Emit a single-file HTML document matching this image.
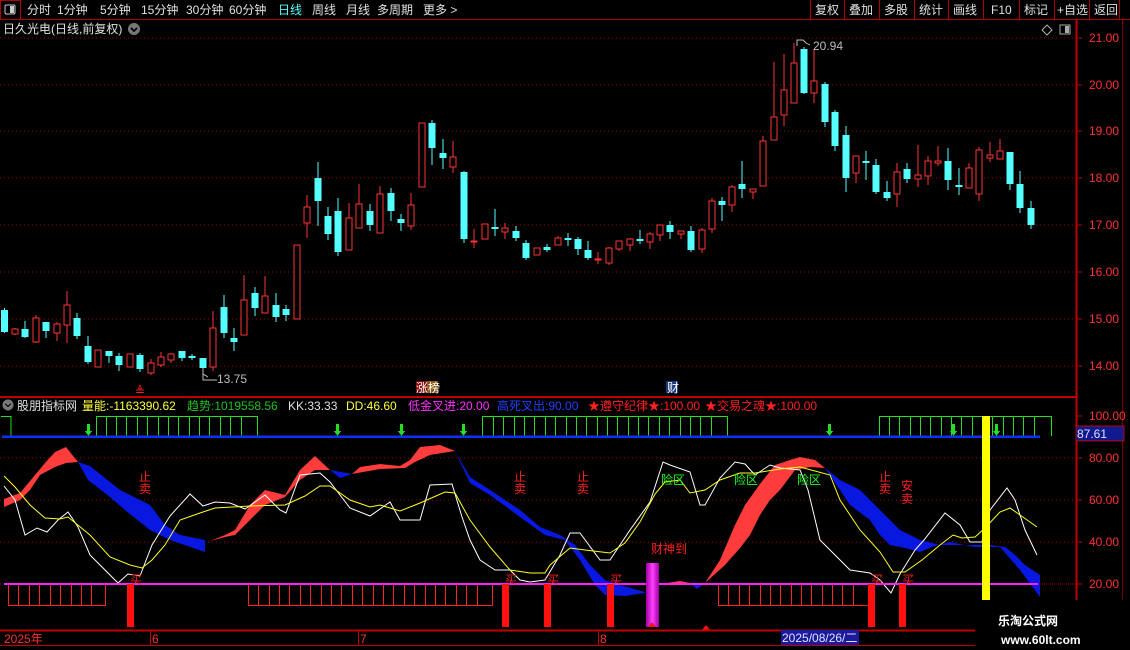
<!DOCTYPE html>
<html><head><meta charset="utf-8"><style>
html,body{margin:0;padding:0;background:#000;width:1130px;height:650px;overflow:hidden}
svg{display:block}
text{font-family:"Liberation Sans","Noto Sans CJK SC",sans-serif;font-size:12px}
</style></head><body>
<svg width="1130" height="650" viewBox="0 0 1130 650" xmlns="http://www.w3.org/2000/svg" shape-rendering="crispEdges">
<rect width="1130" height="650" fill="#000"/>
<!-- top bar -->
<line x1="0" y1="19.5" x2="1130" y2="19.5" stroke="#b00000"/>
<rect x="0.5" y="0.5" width="20" height="19" fill="none" stroke="#b00000"/>
<rect x="5" y="5" width="10" height="9" rx="1.5" fill="none" stroke="#ccc" stroke-width="1.3"/><rect x="10" y="6" width="4" height="7" fill="#ccc"/>
<g fill="#e0e0e0"><text x="27" y="14">分时</text><text x="57" y="14">1分钟</text><text x="100" y="14">5分钟</text><text x="141" y="14">15分钟</text><text x="186" y="14">30分钟</text><text x="229" y="14">60分钟</text><text x="278" y="14" fill="#54ffff">日线</text><text x="312" y="14">周线</text><text x="346" y="14">月线</text><text x="377" y="14">多周期</text><text x="423" y="14">更多 &gt;</text></g>
<g stroke="#b00000"><line x1="810.5" y1="0" x2="810.5" y2="19"/><line x1="844.5" y1="0" x2="844.5" y2="19"/><line x1="879.5" y1="0" x2="879.5" y2="19"/><line x1="914.5" y1="0" x2="914.5" y2="19"/><line x1="948.5" y1="0" x2="948.5" y2="19"/><line x1="983.5" y1="0" x2="983.5" y2="19"/><line x1="1019.5" y1="0" x2="1019.5" y2="19"/><line x1="1054.5" y1="0" x2="1054.5" y2="19"/><line x1="1089.5" y1="0" x2="1089.5" y2="19"/><line x1="1119.5" y1="0" x2="1119.5" y2="19"/></g>
<g fill="#e0e0e0"><text x="815" y="14">复权</text><text x="849" y="14">叠加</text><text x="884" y="14">多股</text><text x="919" y="14">统计</text><text x="953" y="14">画线</text><text x="991" y="14">F10</text><text x="1024" y="14">标记</text><text x="1057" y="14">+自选</text><text x="1094" y="14">返回</text></g>
<text x="3" y="33" fill="#e0e0e0">日久光电(日线,前复权)</text>
<circle cx="134" cy="29" r="6" fill="#777"/><path d="M131 28 L134 31 L137 28" stroke="#000" stroke-width="1.5" fill="none"/>
<path d="M1047 25 L1052 30 L1047 35 L1042 30Z" fill="none" stroke="#aaa"/>
<rect x="1060" y="25" width="10" height="9" fill="none" stroke="#aaa"/><rect x="1065" y="26" width="4" height="7" fill="#aaa"/>
<!-- axes -->
<line x1="1076.5" y1="20" x2="1076.5" y2="630" stroke="#c00000" stroke-width="2"/>
<line x1="1122.5" y1="20" x2="1122.5" y2="630" stroke="#800000"/>
<g stroke="#a00000" stroke-dasharray="1,3"><line x1="0" y1="38" x2="1076" y2="38"/><line x1="0" y1="85" x2="1076" y2="85"/><line x1="0" y1="131" x2="1076" y2="131"/><line x1="0" y1="178" x2="1076" y2="178"/><line x1="0" y1="225" x2="1076" y2="225"/><line x1="0" y1="272" x2="1076" y2="272"/><line x1="0" y1="319" x2="1076" y2="319"/><line x1="0" y1="366" x2="1076" y2="366"/>
<line x1="0" y1="458" x2="1076" y2="458"/><line x1="0" y1="500" x2="1076" y2="500"/><line x1="0" y1="542" x2="1076" y2="542"/><line x1="0" y1="584" x2="1076" y2="584"/></g>
<g stroke="#c00000"><line x1="1076" y1="38" x2="1082" y2="38"/><line x1="1076" y1="85" x2="1082" y2="85"/><line x1="1076" y1="131" x2="1082" y2="131"/><line x1="1076" y1="178" x2="1082" y2="178"/><line x1="1076" y1="225" x2="1082" y2="225"/><line x1="1076" y1="272" x2="1082" y2="272"/><line x1="1076" y1="319" x2="1082" y2="319"/><line x1="1076" y1="366" x2="1082" y2="366"/><line x1="1076" y1="416" x2="1082" y2="416"/><line x1="1076" y1="458" x2="1082" y2="458"/><line x1="1076" y1="500" x2="1082" y2="500"/><line x1="1076" y1="542" x2="1082" y2="542"/><line x1="1076" y1="584" x2="1082" y2="584"/></g>
<g fill="#ff3232"><text x="1089" y="42">21.00</text><text x="1089" y="89">20.00</text><text x="1089" y="135">19.00</text><text x="1089" y="182">18.00</text><text x="1089" y="229">17.00</text><text x="1089" y="276">16.00</text><text x="1089" y="323">15.00</text><text x="1089" y="370">14.00</text>
<text x="1089" y="420">100.00</text><text x="1089" y="462">80.00</text><text x="1089" y="504">60.00</text><text x="1089" y="546">40.00</text><text x="1089" y="588">20.00</text></g>
<rect x="1076" y="426" width="48" height="15" fill="#101a8c" stroke="#c00000"/><text x="1077" y="438" fill="#e0e0ff">87.61</text>
<!-- candles cyan -->
<g stroke="#54ffff" fill="none" stroke-width="1.3"><path d="M4.5 308V333M25 321V338M46 322V338M77 313V339M88 336V364M109 351V363M119 353V371M140 353V372M182 351V361M192 354V360M203 358V378M224 295V338M234 328V351M255 287V316M276 293V322M286 305V321M318 162V226M328 207V240M338 198V256M370 204V231M391 188V221M401 214V231M432 120V165M443 139V169M464 171V243M495 209V236M516 226V241M526 240V260M547 244V252M568 233V246M578 237V255M588 241V260M640 230V244M670 221V239M691 226V252M722 197V221M742 161V198M804 47V94M825 82V127M835 110V151M846 126V192M866 151V180M876 159V194M887 181V201M907 163V183M948 148V190M959 168V195M1010 152V190M1020 171V213M1031 201V229"/></g>
<g fill="#54ffff"><rect x="1" y="310" width="7" height="22"/><rect x="21.5" y="329" width="7" height="8"/><rect x="42.5" y="322" width="7" height="9"/><rect x="73.5" y="318" width="7" height="18"/><rect x="84.5" y="346" width="7" height="16"/><rect x="105.5" y="351" width="7" height="5"/><rect x="115.5" y="356" width="7" height="9"/><rect x="136.5" y="355" width="7" height="14"/><rect x="178.5" y="351" width="7" height="7"/><rect x="188.5" y="356" width="7" height="2"/><rect x="199.5" y="358" width="7" height="10"/><rect x="220.5" y="307" width="7" height="26"/><rect x="230.5" y="338" width="7" height="4"/><rect x="251.5" y="293" width="7" height="15"/><rect x="272.5" y="305" width="7" height="12"/><rect x="282.5" y="309" width="7" height="6"/><rect x="314.5" y="178" width="7" height="23"/><rect x="324.5" y="216" width="7" height="18"/><rect x="334.5" y="211" width="7" height="41"/><rect x="366.5" y="211" width="7" height="14"/><rect x="387.5" y="193" width="7" height="18"/><rect x="397.5" y="219" width="7" height="4"/><rect x="428.5" y="123" width="7" height="25"/><rect x="439.5" y="153" width="7" height="5"/><rect x="460.5" y="172" width="7" height="67"/><rect x="491.5" y="227" width="7" height="2"/><rect x="512.5" y="231" width="7" height="7"/><rect x="522.5" y="243" width="7" height="15"/><rect x="543.5" y="247" width="7" height="3"/><rect x="564.5" y="238" width="7" height="2"/><rect x="574.5" y="239" width="7" height="10"/><rect x="584.5" y="250" width="7" height="8"/><rect x="636.5" y="239" width="7" height="2"/><rect x="666.5" y="225" width="7" height="7"/><rect x="687.5" y="231" width="7" height="19"/><rect x="718.5" y="201" width="7" height="4"/><rect x="738.5" y="184" width="7" height="5"/><rect x="800.5" y="49" width="7" height="44"/><rect x="821.5" y="84" width="7" height="38"/><rect x="831.5" y="112" width="7" height="34"/><rect x="842.5" y="135" width="7" height="43"/><rect x="862.5" y="161" width="7" height="2"/><rect x="872.5" y="165" width="7" height="27"/><rect x="883.5" y="192" width="7" height="6"/><rect x="903.5" y="169" width="7" height="10"/><rect x="944.5" y="161" width="7" height="19"/><rect x="955.5" y="185" width="7" height="2"/><rect x="1006.5" y="152" width="7" height="32"/><rect x="1016.5" y="184" width="7" height="24"/><rect x="1027.5" y="208" width="7" height="17"/></g>
<!-- candles red -->
<g stroke="#ff3232" fill="none" stroke-width="1.3"><path d="M15 328V335M36 315V343M57 322V341M67 291V343M151 359V375M161 352V367M171 353V363M213 311V371M244 275V335M265 276V313M307 195V238M349 203V250M359 184V228M380 186V233M411 193V230M453 141V173M474 229V248M505 223V239M558 236V245M598 252V264M609 247V265M619 241V251M630 238V251M650 232V249M660 225V241M681 231V239M702 228V253M712 198V233M732 185V212M753 189V199M763 136V186M774 62V140M784 54V126M794 43V103M814 49V103M856 156V183M897 163V207M918 145V187M928 156V185M938 146V166M969 163V188M979 147V201M990 142V162M1000 139V159"/></g>
<g stroke="#ff3232" fill="#000" stroke-width="1.3"><rect x="12" y="329" width="6" height="5"/><rect x="33" y="318" width="6" height="24"/><rect x="54" y="324" width="6" height="9"/><rect x="64" y="305" width="6" height="20"/><rect x="95" y="350" width="6" height="17"/><rect x="127" y="354" width="6" height="13"/><rect x="148" y="363" width="6" height="10"/><rect x="158" y="357" width="6" height="8"/><rect x="168" y="354" width="6" height="6"/><rect x="210" y="328" width="6" height="39"/><rect x="241" y="300" width="6" height="35"/><rect x="262" y="296" width="6" height="17"/><rect x="294" y="245" width="6" height="74"/><rect x="304" y="207" width="6" height="16"/><rect x="346" y="218" width="6" height="32"/><rect x="356" y="204" width="6" height="24"/><rect x="377" y="194" width="6" height="39"/><rect x="408" y="205" width="6" height="21"/><rect x="419" y="123" width="6" height="64"/><rect x="450" y="157" width="6" height="10"/><rect x="471" y="241" width="6" height="1"/><rect x="482" y="224" width="6" height="15"/><rect x="502" y="228" width="6" height="4"/><rect x="534" y="248" width="6" height="7"/><rect x="555" y="238" width="6" height="7"/><rect x="595" y="259" width="6" height="1"/><rect x="606" y="248" width="6" height="15"/><rect x="616" y="241" width="6" height="8"/><rect x="627" y="239" width="6" height="6"/><rect x="647" y="234" width="6" height="8"/><rect x="657" y="225" width="6" height="10"/><rect x="678" y="231" width="6" height="3"/><rect x="699" y="230" width="6" height="19"/><rect x="709" y="201" width="6" height="28"/><rect x="729" y="187" width="6" height="18"/><rect x="750" y="189" width="6" height="3"/><rect x="760" y="141" width="6" height="45"/><rect x="771" y="117" width="6" height="23"/><rect x="781" y="90" width="6" height="25"/><rect x="791" y="63" width="6" height="40"/><rect x="811" y="81" width="6" height="12"/><rect x="853" y="156" width="6" height="17"/><rect x="894" y="172" width="6" height="22"/><rect x="915" y="175" width="6" height="4"/><rect x="925" y="161" width="6" height="15"/><rect x="935" y="161" width="6" height="2"/><rect x="966" y="168" width="6" height="20"/><rect x="976" y="150" width="6" height="44"/><rect x="987" y="155" width="6" height="3"/><rect x="997" y="151" width="6" height="8"/></g>
<path d="M203 368V380H217M203 374L208 377" stroke="#bbb" fill="none"/><text x="217" y="383" fill="#bbb">13.75</text>
<path d="M797 46V40H803L806 43L810 45" stroke="#bbb" fill="none"/><text x="813" y="50" fill="#bbb">20.94</text>
<text x="135" y="395" fill="#ff2020" font-size="11">≜</text>
<rect x="416" y="381" width="11" height="12" fill="#8a0a0a"/><rect x="427" y="381" width="11" height="12" fill="#8a5a10"/><text x="416" y="392" fill="#fff" font-size="11">涨榜</text>
<rect x="666" y="381" width="12" height="12" fill="#1a3a7a"/><text x="667" y="392" fill="#fff" font-size="11">财</text>
<!-- indicator header -->
<line x1="0" y1="397" x2="1076" y2="397" stroke="#c00000" stroke-width="2"/>
<circle cx="8" cy="405" r="5.5" fill="#777"/><path d="M5.5 404L8 406.5L10.5 404" stroke="#000" fill="none" stroke-width="1.3"/>
<text x="17" y="410" fill="#e0e0e0">股朋指标网</text>
<text x="82" y="410" fill="#ffff40">量能:-1163390.62</text>
<text x="187" y="410" fill="#20c020">趋势:1019558.56</text>
<text x="288" y="410" fill="#e0e0e0">KK:33.33</text>
<text x="346" y="410" fill="#ffff40">DD:46.60</text>
<text x="408" y="410" fill="#ff30ff">低金叉进:20.00</text>
<text x="497" y="410" fill="#2040ff">高死叉出:90.00</text>
<text x="588" y="410" fill="#ff2020">★遵守纪律★:100.00</text>
<text x="705" y="410" fill="#ff2020">★交易之魂★:100.00</text>
<!-- green boxes -->
<g stroke="#20e020" fill="none"><path d="M1 416.5H11V436M96.5 436V416.5H257.5V436M482.5 436V416.5H727.5V436M879.5 436V416.5H1051.5V436"/>
<path d="M106.5 417V436M116.5 417V436M126.5 417V436M137.5 417V436M147.5 417V436M158.5 417V436M168.5 417V436M178.5 417V436M189.5 417V436M199.5 417V436M209.5 417V436M220.5 417V436M230.5 417V436M241.5 417V436M493.5 417V436M503.5 417V436M514.5 417V436M524.5 417V436M534.5 417V436M545.5 417V436M555.5 417V436M566.5 417V436M576.5 417V436M586.5 417V436M597.5 417V436M607.5 417V436M617.5 417V436M628.5 417V436M638.5 417V436M648.5 417V436M659.5 417V436M669.5 417V436M680.5 417V436M690.5 417V436M700.5 417V436M711.5 417V436M889.5 417V436M899.5 417V436M910.5 417V436M920.5 417V436M930.5 417V436M941.5 417V436M951.5 417V436M961.5 417V436M972.5 417V436M982.5 417V436M992.5 417V436M1003.5 417V436M1013.5 417V436M1023.5 417V436M1034.5 417V436"/></g>
<line x1="2" y1="436.5" x2="1040" y2="436.5" stroke="#1030ff" stroke-width="2.5"/>
<g fill="#20e020"><path d="M85 431h7l-3.5 5zM87 424h3v7h-3z"/><path d="M334 431h7l-3.5 5zM336 424h3v7h-3z"/><path d="M398 431h7l-3.5 5zM400 424h3v7h-3z"/><path d="M460 431h7l-3.5 5zM462 424h3v7h-3z"/><path d="M826 431h7l-3.5 5zM828 424h3v7h-3z"/><path d="M950 431h7l-3.5 5zM952 424h3v7h-3z"/><path d="M993 431h7l-3.5 5zM995 424h3v7h-3z"/></g>
<!-- ribbons -->
<g shape-rendering="auto">
<polygon fill="#ff3c3c" points="4,499 20,493 35,475 45,463 55,452 66,447 78,462 66,463 55,467 40,475 30,490 20,500 4,507"/>
<polygon fill="#0818e0" points="78,462 90,466 120,490 150,505 165,525 180,535 205,540 205,552 170,540 150,530 125,510 110,497 88,480"/>
<polygon fill="#ff3c3c" points="210,541 225,535 235,530 250,505 265,490 285,495 300,470 315,456 330,470 315,470 300,480 285,497 265,505 250,520 235,535 225,537"/>
<polygon fill="#0818e0" points="330,470 352,474 340,478"/>
<polygon fill="#ff3c3c" points="352,474 360,467 380,464 400,466 410,460 420,447 440,445 455,451 430,455 415,462 405,468 380,469"/>
<polygon fill="#0818e0" points="455,451 470,477 490,490 520,510 540,527 560,535 575,545 590,565 605,580 620,585 645,592 645,593 625,596 605,595 595,585 580,560 565,540 545,535 520,517 490,495 470,483"/>
<polygon fill="#ff3c3c" points="660,584 680,581 690,583 680,585"/>
<polygon fill="#0818e0" points="690,583 705,583 697,589"/>
<polygon fill="#ff3c3c" points="705,583 720,560 735,525 745,505 760,484 775,465 790,460 800,457 815,460 825,468 810,467 795,470 780,490 770,500 760,515 750,535 740,548 725,565"/>
<polygon fill="#0818e0" points="825,468 840,480 860,490 880,510 900,530 920,540 940,545 990,545 1005,547 1015,555 1025,565 1040,575 1040,597 1020,570 1000,547 975,547 950,542 935,546 920,552 905,548 890,545 880,535 870,520 850,505 840,490"/>
<polyline fill="none" stroke="#fff" stroke-width="1" points="4,486 15,500 25,535 37,528 47,532 58,520 68,512 78,527 90,555 100,565 118,583 128,574 140,576 152,545 170,516 190,494 203,506 215,502 230,503 245,509 265,495 280,510 286,513 300,475 320,473 330,482 350,508 370,516 390,502 400,520 420,520 430,485 452,484 462,517 470,540 480,560 495,570 510,570 520,580 530,582 545,580 560,555 570,533 580,533 600,560 610,560 630,530 650,502 663,462 670,465 690,472 700,505 705,505 720,478 735,462 745,464 755,475 770,465 780,468 800,470 808,490 820,540 850,570 870,573 880,580 891,593 900,574 915,550 924,540 945,513 960,525 970,542 982,542 990,510 1007,488 1015,500 1025,530 1037,555"/>
<polyline fill="none" stroke="#ffff20" stroke-width="1" points="4,476 15,487 30,505 45,518 60,519 68,517 90,535 110,557 130,565 142,568 152,560 165,545 180,520 200,513 215,508 250,506 285,505 305,496 320,486 330,486 350,500 370,507 380,505 400,511 420,503 445,492 455,493 470,520 490,547 510,570 530,573 545,573 550,565 570,548 585,550 610,553 625,543 640,522 655,494 665,482 680,480 690,493 705,490 720,480 740,473 755,473 780,469 800,467 830,475 840,500 860,530 880,552 893,572 905,572 922,560 940,545 953,535 962,538 975,537 985,528 1000,512 1010,508 1020,515 1037,527"/>
</g>
<!-- red boxes bottom -->
<g stroke="#ff2020" fill="none"><path d="M8.5 584V605.5H105.5V584M248.5 584V605.5H492.5V584M718.5 584V605.5H870.5V584"/>
<path d="M18.5 584V605M29.5 584V605M39.5 584V605M50.5 584V605M60.5 584V605M71.5 584V605M81.5 584V605M91.5 584V605M258.5 584V605M269.5 584V605M279.5 584V605M289.5 584V605M300.5 584V605M310.5 584V605M321.5 584V605M331.5 584V605M341.5 584V605M352.5 584V605M362.5 584V605M373.5 584V605M383.5 584V605M393.5 584V605M404.5 584V605M414.5 584V605M425.5 584V605M435.5 584V605M445.5 584V605M456.5 584V605M466.5 584V605M477.5 584V605M728.5 584V605M739.5 584V605M749.5 584V605M760.5 584V605M770.5 584V605M780.5 584V605M791.5 584V605M801.5 584V605M811.5 584V605M822.5 584V605M832.5 584V605M842.5 584V605M853.5 584V605"/></g>
<line x1="4" y1="584" x2="1038" y2="584" stroke="#ff20ff" stroke-width="2"/>
<line x1="1038" y1="584" x2="1076" y2="584" stroke="#c00000" stroke-dasharray="1,3"/>
<g fill="#ff1010"><rect x="127" y="584" width="7" height="43"/><rect x="502" y="584" width="7" height="43"/><rect x="544" y="584" width="7" height="43"/><rect x="607" y="584" width="7" height="43"/><rect x="868" y="584" width="7" height="43"/><rect x="899" y="584" width="7" height="43"/></g>
<defs><linearGradient id="mg" x1="0" x2="1"><stop offset="0" stop-color="#a000a0"/><stop offset=".5" stop-color="#ff40ff"/><stop offset="1" stop-color="#a000a0"/></linearGradient></defs>
<rect x="646" y="563" width="13" height="64" fill="url(#mg)"/>
<rect x="982" y="416" width="8" height="184" fill="#ffff00"/>
<path d="M648 627l4-5 4 5zM701 631l5-6 5 6z" fill="#ff1010"/>
<g fill="#ff2020" font-size="11"><text x="130" y="584">买</text><text x="505" y="584">买</text><text x="547" y="584">买</text><text x="610" y="584">买</text><text x="871" y="584">买</text><text x="902" y="584">买</text></g>
<g fill="#ff2020"><text x="139" y="481">止</text><text x="139" y="493">卖</text><text x="514" y="481">止</text><text x="514" y="493">卖</text><text x="577" y="481">止</text><text x="577" y="493">卖</text><text x="879" y="481">止</text><text x="879" y="493">卖</text><text x="901" y="490">安</text><text x="901" y="503">卖</text><text x="651" y="553">财神到</text></g>
<g fill="#20ff20"><text x="661" y="484">险区</text><text x="734" y="484">险区</text><text x="797" y="484">险区</text></g>
<!-- time axis -->
<line x1="0" y1="630.5" x2="1076" y2="630.5" stroke="#c00000" stroke-width="2"/>
<line x1="0" y1="645.5" x2="975" y2="645.5" stroke="#c00000"/>
<g stroke="#c00000"><line x1="150.5" y1="630" x2="150.5" y2="645"/><line x1="358.5" y1="630" x2="358.5" y2="645"/><line x1="598.5" y1="630" x2="598.5" y2="645"/></g>
<g fill="#ff3232"><text x="4" y="643">2025年</text><text x="152" y="643">6</text><text x="360" y="643">7</text><text x="600" y="643">8</text></g>
<rect x="781" y="630" width="78" height="15" fill="#1a1a9a"/><text x="782" y="642" fill="#e0e0ff">2025/08/26/二</text>
<!-- watermark -->
<rect x="975" y="600" width="155" height="50" fill="#000"/>
<text x="998" y="625" fill="#fff" font-size="19" font-weight="bold" font-family="'Noto Sans CJK SC',sans-serif">乐淘公式网</text>
<text x="1001" y="644" fill="#fff" font-size="14" font-weight="bold" font-family="'Liberation Serif',serif">www.60lt.com</text>
</svg>
</body></html>
